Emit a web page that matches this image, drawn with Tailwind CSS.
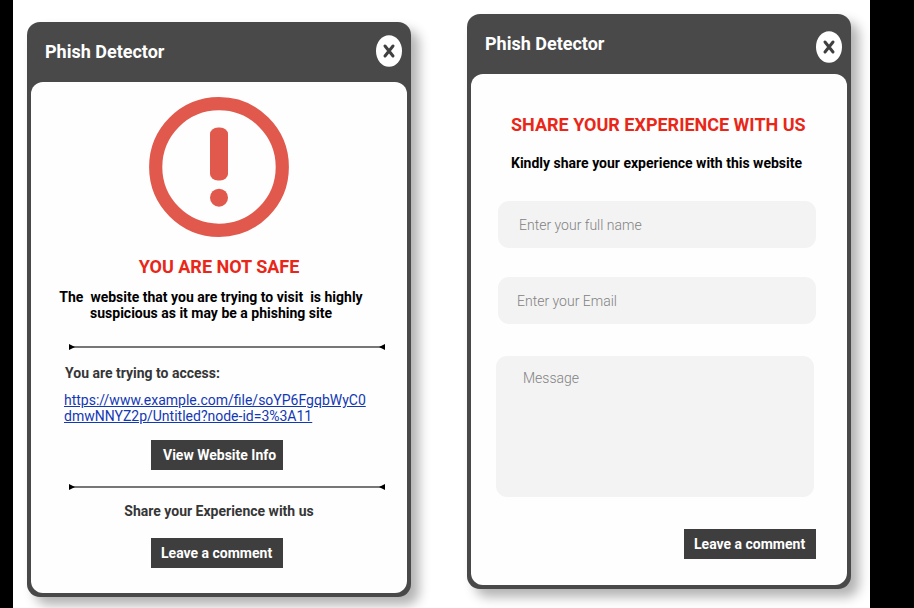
<!DOCTYPE html>
<html lang="en">
<head>
<meta charset="utf-8">
<title>Phish Detector</title>
<script src="https://cdn.jsdelivr.net/npm/@tailwindcss/browser@4"></script>
</head>
<body class="h-[608px] w-[914px] overflow-hidden bg-black pl-[13px] font-['Roboto','Liberation_Sans',sans-serif]">
<main class="flex h-[608px] w-[857px] items-start gap-[56px] overflow-hidden bg-white pl-[14px]">

  <section class="mt-[22px] h-[575px] w-[384px] shrink-0 rounded-[13px] bg-[#494949] px-1 pb-1 shadow-[8px_8px_12px_rgba(0,0,0,0.3)]">
    <header class="flex h-[60px] items-center justify-between pl-[14px] pr-[5px]">
      <h1 class="whitespace-nowrap text-[18px] leading-6 font-bold text-white">Phish Detector</h1>
      <button class="-mt-[2px] block h-8 w-[26px]" aria-label="Close">
        <svg class="block" width="26" height="32" viewBox="0 0 26 32"><ellipse cx="13" cy="16" rx="13" ry="15.8" fill="#fff"/><path d="M9 11L17 21M17 11L9 21" stroke="#404040" stroke-width="3" stroke-linecap="round"/></svg>
      </button>
    </header>
    <div class="flex h-[511px] flex-col items-center rounded-[12px] bg-[#fefefe] pt-[15px]">
      <svg class="block shrink-0" width="140" height="140" viewBox="0 0 140 140"><circle cx="70" cy="70" r="63.3" fill="none" stroke="#e1594d" stroke-width="13.2"/><rect x="61" y="30.5" width="18" height="53" rx="8" ry="6.5" fill="#e1594d"/><circle cx="70" cy="100.7" r="9" fill="#e1594d"/></svg>
      <h2 class="mt-[18px] whitespace-nowrap text-[18px] leading-6 font-bold text-[#e92719]">YOU ARE NOT SAFE</h2>
      <p class="mt-[10px] mr-[16px] whitespace-pre text-center text-[14px] leading-4 font-bold text-black">The  website that you are trying to visit  is highly
suspicious as it may be a phishing site</p>
      <svg class="mt-[23px] ml-[16px] block shrink-0" width="316" height="6" viewBox="0 0 316 6"><path d="M4 3H312" stroke="#777" stroke-width="2"/><path d="M0 0L6 3L0 6ZM316 0L310 3L316 6Z" fill="#000"/></svg>
      <p class="mt-[15px] w-[308px] whitespace-nowrap text-[14px] leading-4 font-bold text-[#363636]">You are trying to access:</p>
      <a class="mt-[11px] block w-[310px] whitespace-nowrap text-[14px] leading-4 text-[#1338b5] underline" href="#">https://www.example.com/file/soYP6FgqbWyC0<br>dmwNNYZ2p/Untitled?node-id=3%3A11</a>
      <button class="mt-4 mr-1 block h-[30px] w-[132px] shrink-0 bg-[#3e3e3e] pl-3 text-left text-[14px] leading-[30px] font-bold whitespace-nowrap text-white">View Website Info</button>
      <svg class="mt-[14px] ml-[16px] block shrink-0" width="316" height="6" viewBox="0 0 316 6"><path d="M4 3H312" stroke="#777" stroke-width="2"/><path d="M0 0L6 3L0 6ZM316 0L310 3L316 6Z" fill="#000"/></svg>
      <p class="mt-[13px] whitespace-nowrap text-[14px] leading-4 font-bold text-[#363636]">Share your Experience with us</p>
      <button class="mt-[19px] mr-1 block h-[30px] w-[132px] shrink-0 bg-[#3e3e3e] pl-[10px] text-left text-[14px] leading-[30px] font-bold whitespace-nowrap text-white">Leave a comment</button>
    </div>
  </section>

  <section class="mt-[14px] h-[575px] w-[384px] shrink-0 rounded-[13px] bg-[#494949] px-1 pb-1 shadow-[8px_8px_12px_rgba(0,0,0,0.3)]">
    <header class="flex h-[60px] items-center justify-between pl-[14px] pr-[5px]">
      <h1 class="whitespace-nowrap text-[18px] leading-6 font-bold text-white">Phish Detector</h1>
      <button class="mt-[6px] block h-8 w-[26px]" aria-label="Close">
        <svg class="block" width="26" height="32" viewBox="0 0 26 32"><ellipse cx="13" cy="16" rx="13" ry="15.8" fill="#fff"/><path d="M9 11L17 21M17 11L9 21" stroke="#404040" stroke-width="3" stroke-linecap="round"/></svg>
      </button>
    </header>
    <form class="flex h-[511px] flex-col rounded-[12px] bg-[#fefefe] pt-[39px] pl-[25px]">
      <h2 class="ml-[15px] whitespace-nowrap text-[18px] leading-6 font-bold text-[#e92719]">SHARE YOUR EXPERIENCE WITH US</h2>
      <p class="mt-[18px] ml-[15px] whitespace-nowrap text-[14px] leading-4 font-bold text-black">Kindly share your experience with this website</p>
      <input class="mt-[30px] ml-[2px] block h-[47px] w-[318px] shrink-0 rounded-[11px] bg-[#f3f3f3] pl-[21px] text-[14px] font-light placeholder:text-[#828282]" placeholder="Enter your full name">
      <input class="mt-[29px] ml-[2px] block h-[47px] w-[318px] shrink-0 rounded-[11px] bg-[#f3f3f3] pl-[19px] text-[14px] font-light placeholder:text-[#828282]" placeholder="Enter your Email">
      <textarea class="mt-8 block h-[141px] w-[318px] shrink-0 resize-none rounded-[11px] bg-[#f3f3f3] pt-[14px] pl-[27px] text-[14px] leading-4 font-light placeholder:text-[#828282]" placeholder="Message"></textarea>
      <button type="button" class="mt-8 ml-[188px] block h-[30px] w-[132px] shrink-0 bg-[#3e3e3e] pl-[10px] text-left text-[14px] leading-[30px] font-bold whitespace-nowrap text-white">Leave a comment</button>
    </form>
  </section>

</main>
</body>
</html>
